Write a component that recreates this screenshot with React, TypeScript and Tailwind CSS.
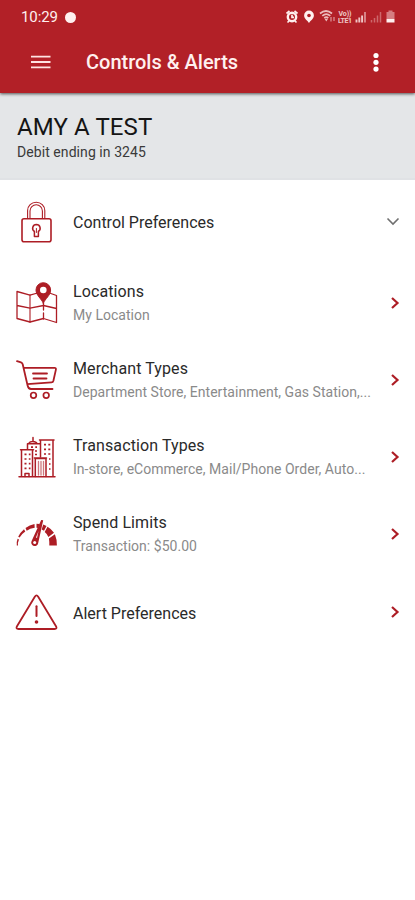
import type { ReactNode } from "react";

const RED = "#ad1d25";

function Icon({ children }: { children: ReactNode }) {
  return (
    <svg className="ml-4 h-[42px] w-[42px] shrink-0 overflow-visible" viewBox="0 0 42 42" fill="none" stroke={RED} strokeWidth="1.6" strokeLinecap="round" strokeLinejoin="round">
      {children}
    </svg>
  );
}

const lock = (
  <Icon>
    <rect x="6" y="17.8" width="29" height="23" rx="2" />
    <path d="M11.6 17.500V9.500a8.600 8.300 0 0 1 17.200 0v8M14 17.500V10a6.200 6.200 0 0 1 12.400 0v7.500" strokeWidth="1.1" />
    <path d="M20.400 23.500a3.800 3.800 0 0 0-2 7V35.500h4v-5A3.800 3.800 0 0 0 20.400 23.500z" strokeWidth="1.500" />
    <path d="M20.400 27.500v4" strokeWidth="1" />
  </Icon>
);

const map = (
  <Icon>
    <path d="M1 8.500L14 12.200L21.500 10M32 9.500L40.500 12.500V39.500L27.500 35.500L14 39L1 35.500V8.500M1 22.500L14 25.200L27.500 22.500L40.500 25.500" strokeWidth="1.300" />
    <path d="M14 12v27" strokeWidth="1.700" opacity="0.650" />
    <path d="M27.500 20v16" strokeWidth="1.300" strokeDasharray="7 3" />
    <path d="M27.300 20.300C25.500 15.500 20 12.500 20 7a7.300 7.300 0 0 1 14.600 0c0 5.500-5.500 8.500-7.300 13.300z" fill={RED} strokeWidth="1" />
    <circle cx="27.300" cy="7" r="3.300" fill="#fff" stroke="none" />
  </Icon>
);

const cart = (
  <Icon>
    <path d="M1 1.200L5 2.400Q6.300 2.800 6.700 4.200L11.600 25.500Q12.300 29 15 29H36.500M7.700 7.800H38.500Q40.300 7.800 39.900 9.600L37.400 20.700Q37 22.200 35.500 22.300L11.300 24.200" strokeWidth="1.800" />
    <path d="M17 13.500H31M17.500 18.500H30.500" strokeWidth="1.800" />
    <circle cx="17.500" cy="35.300" r="2.800" strokeWidth="1.700" />
    <circle cx="30.200" cy="35.300" r="2.800" strokeWidth="1.700" />
  </Icon>
);

const buildings = (
  <Icon>
    <path d="M3 39.700H39M5.500 39.500V12.700H16.500V39.500M4.500 12.700H17.500M24.500 20V3H37V39.500M23.500 3H38M11.500 12V6.700H24M13 6.500C13.500 3.800 20 3.800 21 6.500M17 4V.500" strokeWidth="1.500" />
    <path d="M19.300 39.500V21.500H30V39.500M18.300 21H30.500" strokeWidth="1.500" />
    <path d="M22.500 24.500V38M25 24.500V38M27.500 24.500V38" strokeWidth="1.300" opacity="0.600" />
    <path d="M8.500 17.300h6M8.500 22h6M8.500 26.700h6M8.500 31.400h6M28 7.700h6.500M28 12.300h6.500M28 17h6.500M33 22h1.500M33 27h1.500M33 32h1.500M15 10.200h6M19 14h3M19 17.500h3" strokeWidth="1.700" strokeDasharray="2 2.300" strokeLinecap="butt" />
    <path d="M9 39.500v-3h4v3" strokeWidth="1.500" />
  </Icon>
);

const gauge = (
  <Icon>
    <g fill={RED} stroke="none">
      <path d="M.8 31.500Q.3 28 1.600 24.800L3 25.500Q1.600 28.500 2 31.500z" />
      <path d="M2.200 22.800Q4 18.500 8 15.200L9.300 17.500Q5.500 20 3.600 23.500z" />
      <path d="M9.500 14Q13.500 11 18.500 10.100L18.700 13.700Q14 14.300 10.700 16.700z" />
      <path d="M20.500 9.800L23.600 10L22.300 13.900L20.500 13.700z" />
      <path d="M27.200 10.500L30.500 12L28 16.800L25.700 15.500z" />
      <path d="M31.500 12.800Q35.700 15.200 38 18.800L32.400 23Q31 19.700 28.700 18z" />
      <path d="M38.900 20.300Q41 25.500 40.900 31.500H33.300Q33.500 27.800 32.900 24.400z" />
      <path d="M25.200 6L27.200 6.300L22.200 29A3.500 3.500 0 1 1 15.500 27.200z" />
      <circle cx="18.700" cy="28.600" r="1.500" fill="#fff" />
      <path d="M20 23.500L22.500 17L21 24z" fill="#fff" />
    </g>
  </Icon>
);

const warning = (
  <Icon>
    <path d="M18.800 4.700Q20.500 2 22.200 4.700L40 34.300Q41.500 37 38.500 37H2.500Q-.5 37 1 34.300z" strokeWidth="1.800" />
    <path d="M20.500 14.300V24" strokeWidth="2" />
    <circle cx="20.500" cy="30" r="1.800" fill={RED} stroke="none" />
  </Icon>
);

type Item = { title: string; detail?: string; icon: ReactNode; height: string; track: string };

const items: Item[] = [
  { title: "Control Preferences", icon: lock, height: "h-[84px] mb-px", track: "tracking-[0px]" },
  { title: "Locations", detail: "My Location", icon: map, height: "h-[77px]", track: "tracking-[0.1px]" },
  { title: "Merchant Types", detail: "Department Store, Entertainment, Gas Station,...", icon: cart, height: "h-[77px]", track: "tracking-[0.1px]" },
  { title: "Transaction Types", detail: "In-store, eCommerce, Mail/Phone Order, Auto...", icon: buildings, height: "h-[77px]", track: "tracking-[0.1px]" },
  { title: "Spend Limits", detail: "Transaction: $50.00", icon: gauge, height: "h-[77px]", track: "tracking-[0.1px]" },
  { title: "Alert Preferences", icon: warning, height: "h-[80px]", track: "tracking-[0px]" },
];

function StatusIcons() {
  return (
    <svg className="ml-auto h-[16px] w-[112px]" viewBox="285 9 112 16" fill="none" stroke="#fff0ef">
      <circle cx="292" cy="17" r="4.200" strokeWidth="2.400" />
      <path d="M286.500 13.500l3-2.500M297.500 13.500l-3-2.500M289 21l-1.500 1.500M295 21l1.500 1.500M292 14.800V17.300h2" strokeWidth="1.700" />
      <path d="M309 23c-1.200-2.500-4.900-4.200-4.900-7.600a4.900 4.900 0 0 1 9.800 0c0 3.400-3.700 5.100-4.900 7.600z" fill="#fff0ef" stroke="none" />
      <circle cx="309" cy="15.500" r="1.800" fill={RED} stroke="none" />
      <g opacity="0.750">
        <path d="M320 13.500Q326 8.500 332 13.500M322.300 15.800Q326.300 12.300 330.300 15.800M324.300 18Q326.300 16.200 328.300 18" strokeWidth="1.700" />
        <path d="M326.300 21.500L324.500 18.700H328.100z" fill="#fff0ef" stroke="none" />
        <path d="M331 17v4.500M334 17v4" strokeWidth="1.300" opacity="0.700" />
      </g>
      <g fill="#fff0ef" stroke="none" fontFamily="Roboto, sans-serif" fontSize="7" fontWeight="700" opacity="0.800">
        <text x="338.500" y="16" textLength="13">Vo))</text>
        <text x="338" y="22.500" textLength="14">LTE1</text>
      </g>
      <path d="M356.500 22.500v-3M359.300 22.500v-5M362.100 22.500v-7" strokeWidth="1.900" opacity="0.800" />
      <path d="M365 22.500V12" strokeWidth="1.900" opacity="0.500" />
      <path d="M371.500 22.500v-2.500M374.500 22.500v-4.500M377.500 22.500v-7M380.500 22.500V12" strokeWidth="1.500" opacity="0.350" />
      <path d="M386.500 12h2v-1.500h4V12h2v7h-8z" fill="#fff0ef" stroke="none" opacity="0.450" />
      <path d="M386.500 19h8v3.500h-8z" fill="#fff0ef" stroke="none" />
    </svg>
  );
}

export default function App() {
  return (
    <div className="flex h-[900px] w-[415px] flex-col overflow-hidden bg-white font-[Roboto,sans-serif]">
      <header className="z-10 h-[93px] shrink-0 bg-[#b22027] text-[#fff0ef] shadow-[0_1px_3px_rgba(0,0,0,0.65)]">
        <div className="flex h-[34px] items-center pr-[18px] pl-[21px]">
          <span className="w-[38px] text-[15px] leading-5 tracking-[-0.1px]">10:29</span>
          <span className="ml-[6px] h-[11px] w-[11px] rounded-full bg-[#fff0ef]" />
          <StatusIcons />
        </div>
        <div className="flex h-[56px] items-center">
          <svg className="ml-[30px] h-[16px] w-[22px]" viewBox="0 0 22 16" stroke="#ffe3e2" strokeWidth="1.800">
            <path d="M1 2.700H20.500M1 8H20.500M1 13.300H20.500" />
          </svg>
          <h1 className="-mt-px ml-[34px] text-[20px] leading-6 font-medium tracking-[0px]">Controls &amp; Alerts</h1>
          <svg className="ml-auto mr-[34px] h-[22px] w-[10px]" viewBox="0 0 10 22" fill="#fff">
            <circle cx="5" cy="4.500" r="2.600" /><circle cx="5" cy="11.300" r="2.600" /><circle cx="5" cy="18.100" r="2.600" />
          </svg>
        </div>
      </header>
      <section className="flex h-[87px] shrink-0 flex-col border-b-2 border-[#e0e2e5] bg-[#e4e6e8] pt-[20px] pl-[17px]">
        <h2 className="text-[24px] leading-[28px] tracking-[0.1px] text-[#151515]">AMY A TEST</h2>
        <p className="mt-[2px] text-[14px] leading-[18px] tracking-[0.07px] text-[#3a3a3a]">Debit ending in 3245</p>
      </section>
      <main className="flex flex-col">
        {items.map((item, i) => (
          <div key={item.title} className={`flex shrink-0 items-center ${item.height}`}>
            {item.icon}
            <div className="ml-[15px] flex flex-col gap-[3px]">
              <span className={`text-[16px] leading-[21px] whitespace-nowrap text-[#2a2a2a] ${item.track}`}>{item.title}</span>
              {item.detail && <span className="text-[14px] leading-[21px] tracking-[0.03px] whitespace-nowrap text-[#8a8a8a]">{item.detail}</span>}
            </div>
            {i === 0 ? (
              <svg className="ml-auto mr-[15px] h-[10px] w-[14px]" viewBox="0 0 14 10" fill="none" stroke="#6f6f6f" strokeWidth="1.600">
                <path d="M1.500 1.500L7 7L12.500 1.500" />
              </svg>
            ) : (
              <svg className="ml-auto mr-[15px] h-[14px] w-[10px]" viewBox="0 0 10 14" fill="none" stroke={RED} strokeWidth="2.200">
                <path d="M2 1L7.500 6L2 11" />
              </svg>
            )}
          </div>
        ))}
      </main>
    </div>
  );
}
